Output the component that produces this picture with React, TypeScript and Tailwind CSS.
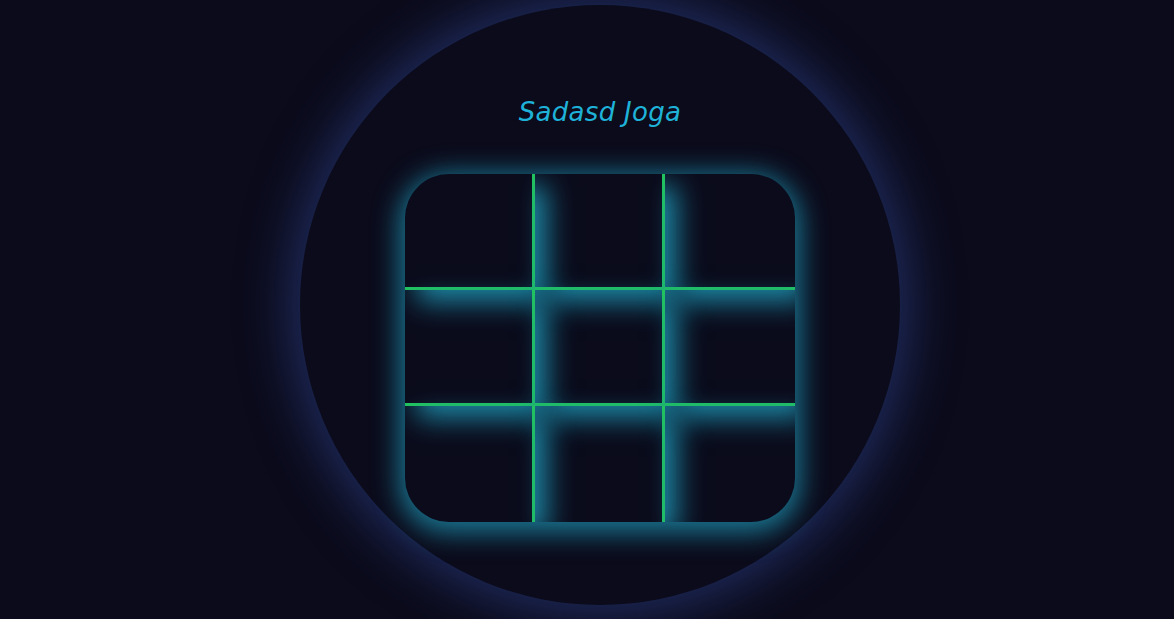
const cellClasses = [
  "border-r-[3px] border-b-[3px]",
  "border-r-[3px] border-b-[3px]",
  "border-b-[3px]",
  "border-r-[3px] border-b-[3px]",
  "border-r-[3px] border-b-[3px]",
  "border-b-[3px]",
  "border-r-[3px]",
  "border-r-[3px]",
  "",
];

const Board = () => {
  return (
    <div className="grid grid-cols-3 grid-rows-3 w-[390px] h-[348px] rounded-[44px] overflow-hidden bg-[#0b0b1b] shadow-[0_5px_26px_6px_rgba(28,135,165,0.85)]">
      {cellClasses.map((cls, i) => (
        <div
          key={i}
          className={`border-[#22c55e] shadow-[12px_12px_26px_rgba(30,140,170,0.95)] ${cls}`}
        />
      ))}
    </div>
  );
};

const App = () => {
  return (
    <div className="w-[1200px] min-h-[640px] bg-[#0b0b1b] flex justify-center">
      <div className="mt-[5px] w-[600px] h-[600px] rounded-full bg-[#0b0b1b] shadow-[0_0_50px_10px_rgba(38,52,112,0.8)] flex flex-col items-center">
        <h1 className="mt-[87px] text-[26px] leading-[40px] tracking-[0.3px] italic font-extralight text-[#1fb2d8] font-['DejaVu_Sans',sans-serif]">
          Sadasd Joga
        </h1>
        <div className="mt-[42px]">
          <Board />
        </div>
      </div>
    </div>
  );
};

export default App;
